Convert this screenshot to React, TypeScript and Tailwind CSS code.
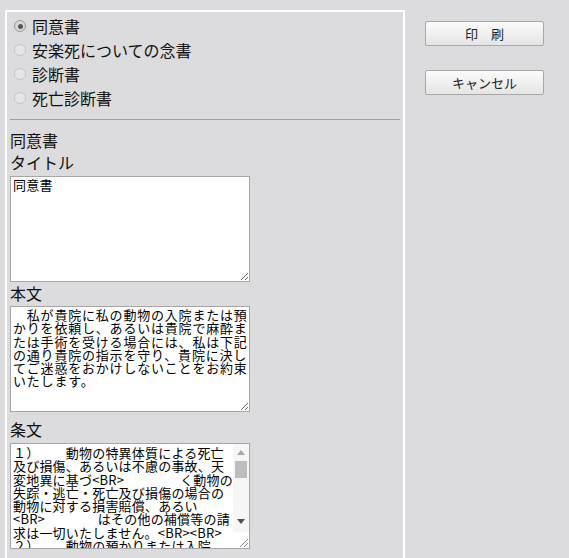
import React from "react"

const jp = "font-['Noto_Sans_CJK_JP','Noto_Sans',sans-serif]"

const options = ["同意書", "安楽死についての念書", "診断書", "死亡診断書"]

const honbun = [
    "　私が貴院に私の動物の入院または預",
    "かりを依頼し、あるいは貴院で麻酔ま",
    "たは手術を受ける場合には、私は下記",
    "の通り貴院の指示を守り、貴院に決し",
    "てご迷惑をおかけしないことをお約束",
    "いたします。",
].join("\n")

const joubun = [
    "１）　　動物の特異体質による死亡",
    "及び損傷、あるいは不慮の事故、天",
    "変地異に基づ<BR>　　　　 く動物の",
    "失踪・逃亡・死亡及び損傷の場合の",
    "動物に対する損害賠償、あるい",
    "<BR>　　　　はその他の補償等の請",
    "求は一切いたしません。<BR><BR>",
    "２）　　動物の預かりまたは入院",
    "中の事故につきましては、",
].join("\n")

const App: React.FC = () => {
    return (
        <div className={`flex items-start w-[569px] h-[558px] bg-[#dcdbdd] overflow-hidden ${jp}`}>
            {/* Form panel */}
            <div className="ml-[5px] mt-[10px] w-[400px] h-[548px] border-t-2 border-x-2 border-white px-[3px] pt-[2px]">
                {/* Document type radios */}
                <div className="flex flex-col">
                    {options.map((label, i) => (
                        <Radio key={label} label={label} checked={i === 0} />
                    ))}
                </div>
                <div className="mt-[9px] border-t border-[#a0a0a0]" />

                <Label text="同意書" className="mt-[9px]" />
                <Label text="タイトル" />
                <textarea
                    className={`mt-[3px] block w-[240px] h-[106px] bg-white border border-[#a6a6a6] px-[2px] py-[1px] text-[13px] leading-[13.3px] tracking-[0.3px] text-black outline-none overflow-hidden ${jp}`}
                    defaultValue="同意書"
                />

                <Label text="本文" />
                <textarea
                    wrap="off"
                    className={`mt-[2px] block w-[240px] h-[106px] bg-white border border-[#a6a6a6] px-[2px] py-[1px] text-[13px] leading-[13.3px] tracking-[0.8px] [text-spacing-trim:space-all] text-black whitespace-pre outline-none overflow-hidden ${jp}`}
                    defaultValue={honbun}
                />

                <Label text="条文" className="mt-[6px]" />
                {/* Article box with classic scrollbar */}
                <div className="mt-[3px] flex w-[240px] h-[106px] bg-white border border-[#a6a6a6]">
                    <textarea
                        wrap="off"
                        className={`flex-1 min-w-0 w-0 resize-none px-[2px] pt-[2px] text-[13px] leading-[13.3px] tracking-[0.2px] [text-spacing-trim:space-all] text-black whitespace-pre outline-none overflow-hidden ${jp}`}
                        defaultValue={joubun}
                    />
                    <Scrollbar />
                </div>
            </div>

            {/* Action buttons */}
            <div className="ml-[20px] pt-[21px] flex flex-col gap-[24px]">
                <ActionButton text="印　刷" />
                <ActionButton text="キャンセル" />
            </div>
        </div>
    )
}

type RadioProps = {
    label: string
    checked?: boolean
}

const Radio: React.FC<RadioProps> = ({ label, checked }) => {
    return (
        <label className="flex items-center h-6 gap-[6px] pl-[4px] text-[16px] text-[#111]">
            <span
                className={`flex w-[12px] h-[12px] rounded-full border items-center justify-center ${checked ? "border-[#9a9a9a] bg-[#d8d8d8]" : "border-[#c4c4c4] bg-[#e6e5e7]"}`}
            >
                {checked && <span className="w-[5px] h-[5px] rounded-full bg-[#555]" />}
            </span>
            <span>{label}</span>
        </label>
    )
}

const Label: React.FC<{ text: string; className?: string }> = ({ text, className }) => (
    <div className={`h-[22px] leading-[22px] text-[16px] text-[#111] ${className ?? ""}`}>{text}</div>
)

const Scrollbar: React.FC = () => (
    <div className="flex flex-col w-4 shrink-0 bg-[#f6f6f6]">
        <div className="h-4 flex items-center justify-center">
            <svg width="8" height="5" viewBox="0 0 8 5">
                <path d="M0 5 L4 0 L8 5 Z" fill="#a8a8a8" />
            </svg>
        </div>
        <div className="mt-[1px] mx-[2px] h-[17px] bg-[#bdbdbd]" />
        <div className="flex-1" />
        <div className="h-4 flex items-start justify-center pt-[3px]">
            <svg width="8" height="5" viewBox="0 0 8 5">
                <path d="M0 0 L8 0 L4 5 Z" fill="#505050" />
            </svg>
        </div>
        <div className="h-4 bg-white flex items-end justify-end">
            <svg width="12" height="12" viewBox="0 0 12 12">
                <path d="M11 3 L3 11 M11 7 L7 11" stroke="#8a8a8a" strokeWidth="1" />
            </svg>
        </div>
    </div>
)

const ActionButton: React.FC<{ text: string }> = ({ text }) => (
    <button className="w-[119px] h-[25px] rounded-[2px] border border-[#a8a8a8] bg-linear-to-b from-[#fbfbfb] to-[#e5e5e5] text-[13px] text-[#222] leading-none">
        {text}
    </button>
)

export default App
